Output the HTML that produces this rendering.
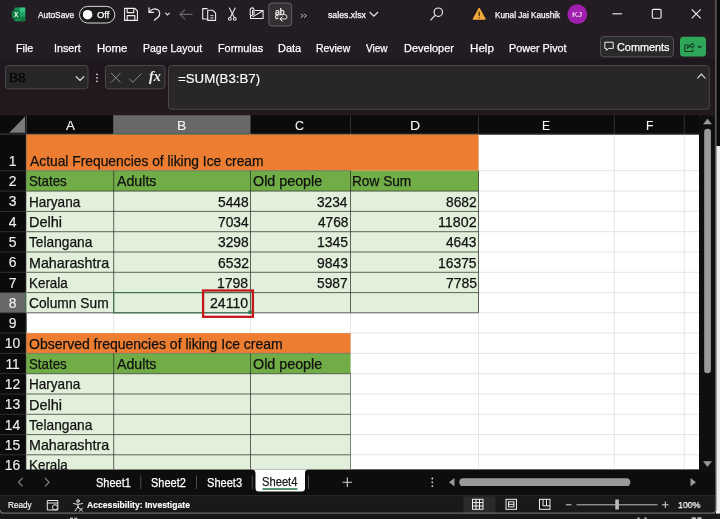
<!DOCTYPE html>
<html lang="en"><head><meta charset="utf-8"><title>sales.xlsx - Excel</title>
<style>
html,body{margin:0;padding:0;}
body{width:720px;height:519px;overflow:hidden;position:relative;background:#181818;font-family:"Liberation Sans",sans-serif;}
.r{position:absolute;box-sizing:border-box;}
.t{position:absolute;white-space:pre;transform-origin:0 50%;display:block;}
svg{position:absolute;left:0;top:0;overflow:visible;}
#labels,#sheet{will-change:transform;}
#sheet{position:absolute;left:0;top:0;width:699px;height:469.6px;overflow:hidden;}
.t{-webkit-text-stroke:0.25px currentColor;}
</style></head><body>
<svg aria-hidden="true" width="720" height="519" viewBox="0 0 720 519">
<rect x="716" y="0" width="4" height="146" fill="#0a0a0a"/>
<rect x="716" y="146" width="4" height="367.6" fill="#ececec"/>
<g fill="#bdbdbd"><rect x="70" y="517.6" width="3" height="1.4"/><rect x="74.300" y="517.6" width="3" height="1.4"/><rect x="637.5" y="517.3" width="2" height="1.7"/><rect x="644.5" y="517.3" width="2" height="1.7"/><rect x="691.500" y="517.3" width="4.500" height="1.7" rx="0.8"/><rect x="697.200" y="517.3" width="4.500" height="1.7" rx="0.8"/></g>
<path d="M0 0H715.6V509.70000000000005a3.5 3.5 0 0 1 -3.5 3.5H3.5a3.5 3.5 0 0 1 -3.5 -3.5Z" fill="#231c22"/>
<defs><linearGradient id="fz" x1="0" y1="0" x2="0" y2="1"><stop offset="0" stop-color="#1f171e"/><stop offset="1" stop-color="#221a1c"/></linearGradient></defs>
<rect x="0" y="59" width="715.6" height="56.5" fill="url(#fz)"/>
<g id="title-icons" transform="translate(0,-0.8)">
<g><rect x="14.4" y="8.4" width="10.8" height="13.6" rx="1.2" fill="#1a8f55"/><rect x="19.8" y="8.4" width="5.4" height="4.6" fill="#33c481"/><rect x="19.8" y="13" width="5.4" height="4.5" fill="#21a366"/><rect x="19.8" y="17.5" width="5.4" height="4.5" fill="#107c41"/><rect x="11.8" y="11.5" width="7.9" height="8.1" rx="0.9" fill="#0f7a40"/></g>
<rect x="79.5" y="7.2" width="35.3" height="16.6" rx="8.3" fill="#1b1a1b" stroke="#d8d8d8" stroke-width="1"/>
<circle cx="87.6" cy="15.5" r="4.8" fill="#ffffff"/>
<g fill="none" stroke="#f0f0f0" stroke-width="1.1" stroke-linejoin="round"><path d="M124.6 9.2h10.2l2.6 2.6v9.4h-12.8z"/><path d="M127.2 9.4v4h6.6v-4"/><path d="M127.2 21v-4.6h7.6v4.6"/></g>
<g fill="none" stroke="#f0f0f0" stroke-width="1.2" stroke-linecap="round" stroke-linejoin="round"><path d="M149 8.6v4.6h4.6"/><path d="M149.4 13c1.4-2.6 5-4.4 8-2.6 3 1.800 3 5.400 0.600 7.600l-3.600 3"/></g>
<path d="M165.3 13.6l2.2 2.200 2.200-2.200" fill="none" stroke="#e0e0e0" stroke-width="1.1"/>
<g fill="none" stroke="#6a666a" stroke-width="1.1" stroke-linecap="round" stroke-linejoin="round"><path d="M180 15.2h12"/><path d="M184.6 10.800l-4.600 4.400 4.600 4.400"/></g>
<g fill="none" stroke="#f0f0f0" stroke-width="1.1" stroke-linejoin="round"><path d="M207.600 9.400h-4.900v10.400h4.900"/><path d="M207.700 11h4.900l3 3v7.200h-7.900z" fill="#231c22"/><path d="M210.300 16.400h3.200M210.300 18.700h3.200" stroke-width="0.9"/></g>
<g fill="none" stroke="#f0f0f0" stroke-width="1.050" stroke-linecap="round"><path d="M229.400 8.800l4.800 9.200"/><path d="M235.200 8.800l-4.800 9.200"/><circle cx="229.800" cy="19.600" r="1.400"/><circle cx="234.800" cy="19.600" r="1.400"/></g>
<g fill="none" stroke="#f0f0f0" stroke-width="1.050" stroke-linejoin="round" stroke-linecap="round"><path d="M255.400 11.400h7.700v7.800h-12.600v-2.200"/><path d="M253 17.400l9.600-5.600"/><path d="M252.600 11v4.200a1.200 1.200 0 0 1 -2.400 0v-4.600a1.900 1.900 0 0 1 3.800 0v4.800"/></g>
<rect x="268.800" y="3.800" width="22.800" height="23" rx="3.2" fill="#352f33" stroke="#6d676b" stroke-width="0.9"/>
<g fill="none" stroke="#f0f0f0" stroke-width="0.95" stroke-linecap="round" stroke-linejoin="round"><path d="M282.300 17.600l-2.400 2.200 2.400 2.200"/><path d="M280.200 19.800h4.600a2.200 2.200 0 0 0 0-4.400h-1"/></g>
<path d="M301 14.600l2 2-2 2M304.300 14.600l2 2-2 2" fill="none" stroke="#e8e8e8" stroke-width="0.9"/>
<path d="M369.600 12.800l4.200 4.200 4.200-4.200" fill="none" stroke="#f0f0f0" stroke-width="1.100"/>
<g fill="none" stroke="#f0f0f0" stroke-width="1.150" stroke-linecap="round"><circle cx="438.300" cy="13" r="4.200"/><path d="M435.200 16.200l-4.400 4.400"/></g>
<path d="M479.200 8.800l6.200 11.200h-12.400z" fill="#f2a93b" stroke="#f2a93b" stroke-width="1" stroke-linejoin="round"/>
<path d="M479.200 12.600v4.200M479.200 18v1" stroke="#3a2a10" stroke-width="1.200" fill="none"/>
<circle cx="577.300" cy="15" r="9.900" fill="#a01fae"/>
<path d="M612.500 14.600h9.500" stroke="#f0f0f0" stroke-width="1.100" fill="none"/>
<rect x="652.300" y="10.200" width="8.800" height="8.800" rx="1.200" fill="none" stroke="#f0f0f0" stroke-width="1.100"/>
<path d="M691.700 10.200l9 9M700.700 10.200l-9 9" stroke="#f0f0f0" stroke-width="1.100" fill="none"/>
</g>
<rect x="600.500" y="36.600" width="73" height="20.200" rx="3.500" fill="#2b2a2b" stroke="#5a585a" stroke-width="0.900"/>
<path d="M604.800 42.200h8.400v6.200h-4.600l-2.200 2v-2h-1.600z" fill="none" stroke="#f0f0f0" stroke-width="1" stroke-linejoin="round"/>
<rect x="680" y="36.700" width="26" height="19.800" rx="3.500" fill="#2fa75b"/>
<g fill="none" stroke="#10301c" stroke-width="1" stroke-linejoin="round"><path d="M688.500 45h-3.700v6.500h8.200v-2"/><path d="M687 48.500c0.500-2.500 2.500-3.800 5-3.800v-1.700l2.800 2.600-2.800 2.600v-1.700c-2 0-3.500 0.500-5 2z"/></g>
<path d="M697.800 45.800l1.900 1.900 1.900-1.900" fill="none" stroke="#10301c" stroke-width="1.100"/>
<rect x="5.500" y="65.500" width="82.500" height="23.300" rx="3" fill="#292628" stroke="#504c50" stroke-width="0.900"/>
<path d="M75.800 76.300l4.200 4.200 4.200-4.200" fill="none" stroke="#e8e8e8" stroke-width="1.200"/>
<g fill="#d8d8d8"><circle cx="97" cy="74.300" r="0.900"/><circle cx="97" cy="77.800" r="0.900"/><circle cx="97" cy="81.300" r="0.900"/></g>
<rect x="105.500" y="65.500" width="59.500" height="23.300" rx="3" fill="#292628" stroke="#504c50" stroke-width="0.900"/>
<path d="M111 73l9.500 9.500M120.500 73l-9.500 9.500" stroke="#8a888a" stroke-width="1" fill="none"/>
<path d="M129 78.500l3.800 3.800 8.700-8.700" stroke="#8a888a" stroke-width="1" fill="none"/>
<rect x="168.500" y="65.500" width="540.800" height="43.700" rx="3" fill="#292628" stroke="#504c50" stroke-width="0.900"/>
<path d="M697.300 78.500l4.100-4.400 4.100 4.400" fill="none" stroke="#e8e8e8" stroke-width="1.100"/>
<rect x="0" y="115.2" width="699" height="354.40000000000003" fill="#0b0b0b"/>
<path d="M699 469.6V119.2a4 4 0 0 1 4 -4H710.6a4 4 0 0 1 4 4V469.6Z" fill="#0f0f0f"/>
<rect x="26.4" y="134.6" width="672.6" height="335.0" fill="#ffffff"/>
<rect x="113.2" y="115.2" width="137.3" height="19.39999999999999" fill="#686868"/>
<rect x="0" y="292.6" width="26.4" height="20.19999999999999" fill="#686868"/>
<path d="M0 170.7H26.4 M0 191.1H26.4 M0 211.4H26.4 M0 231.7H26.4 M0 252.0H26.4 M0 272.3H26.4 M0 292.6H26.4 M0 312.8H26.4 M0 333.1H26.4 M0 353.4H26.4 M0 373.7H26.4 M0 394.0H26.4 M0 414.3H26.4 M0 434.6H26.4 M0 454.8H26.4" stroke="#3a3a3a" stroke-width="0.8" fill="none"/>
<path d="M25 116.600V132.700H9.300z" fill="#7a7a7a"/>
<path d="M0 134.1H699M26.2 115.2V469.6" stroke="#4a4a4a" stroke-width="0.9" fill="none"/>
<path d="M250.5 115.2V134.6" stroke="#3a3a3a" stroke-width="0.800"/>
<path d="M350.5 115.2V134.6" stroke="#3a3a3a" stroke-width="0.800"/>
<path d="M478.5 115.2V134.6" stroke="#3a3a3a" stroke-width="0.800"/>
<path d="M614.3 115.2V134.6" stroke="#3a3a3a" stroke-width="0.800"/>
<path d="M684.3 115.2V134.6" stroke="#3a3a3a" stroke-width="0.800"/>
<path d="M26.4 115.2V134.6" stroke="#3a3a3a" stroke-width="0.800"/>
<path d="M113.2 134.1H250.5M25.799999999999997 292.6V312.8" stroke="#3f7552" stroke-width="1.3" fill="none"/>
<path d="M26.4 170.7H699 M26.4 191.1H699 M26.4 211.4H699 M26.4 231.7H699 M26.4 252.0H699 M26.4 272.3H699 M26.4 292.6H699 M26.4 312.8H699 M26.4 333.1H699 M26.4 353.4H699 M26.4 373.7H699 M26.4 394.0H699 M26.4 414.3H699 M26.4 434.6H699 M26.4 454.8H699 M113.7 134.6V469.6 M250.5 134.6V469.6 M350.5 134.6V469.6 M478.5 134.6V469.6 M614.3 134.6V469.6 M684.3 134.6V469.6" stroke="#e2e2e2" stroke-width="0.900" fill="none"/>
<rect x="26.4" y="134.6" width="452.1" height="36.099999999999994" fill="#ed7d31"/>
<rect x="26.4" y="170.7" width="452.1" height="20.400000000000006" fill="#70ad47"/>
<rect x="26.4" y="191.1" width="452.1" height="121.70000000000002" fill="#e2efda"/>
<rect x="26.4" y="333.1" width="324.1" height="20.299999999999955" fill="#ed7d31"/>
<rect x="26.4" y="353.4" width="324.1" height="20.30000000000001" fill="#70ad47"/>
<rect x="26.4" y="373.7" width="324.1" height="95.90000000000003" fill="#e2efda"/>
<path d="M26.4 170.7H350.5 M26.4 353.4H350.5 M350.5 373.7V469.6" stroke="#6f7a66" stroke-width="0.9" fill="none"/>
<path d="M26.4 191.1H478.5 M26.4 211.4H478.5 M26.4 231.7H478.5 M26.4 252.0H478.5 M26.4 272.3H478.5 M26.4 292.6H478.5 M26.4 312.8H478.5 M113.7 170.7V312.8 M250.5 170.7V312.8 M350.5 170.7V312.8 M478.5 170.7V312.8 M26.4 373.7H350.5 M26.4 394.0H350.5 M26.4 414.3H350.5 M26.4 434.6H350.5 M26.4 454.8H350.5 M113.7 353.4V469.6 M250.5 353.4V469.6" stroke="#30352e" stroke-width="0.75" fill="none"/>
<rect x="113.7" y="292.6" width="136.8" height="20.19999999999999" fill="none" stroke="#3d7353" stroke-width="1.1"/>
<rect x="248.300" y="310.600" width="3.400" height="3.400" fill="#2f7d52"/>
<rect x="203.100" y="290.500" width="49.800" height="26.300" fill="none" stroke="#c5161d" stroke-width="2.300"/>
<path d="M703.6 124l3.900-5 3.900 5z" fill="#9a9a9a" stroke="#9a9a9a" stroke-width="0.6" stroke-linejoin="round"/>
<rect x="704.2" y="128.700" width="6.700" height="244.500" rx="3.300" fill="#9a9a9a"/>
<path d="M703.6 461.600l3.900 5 3.900-5z" fill="#9a9a9a" stroke="#9a9a9a" stroke-width="0.6" stroke-linejoin="round"/>
<rect x="0" y="469.6" width="715.6" height="26.0" fill="#0d0d0d"/>
<path d="M22.500 478l-4 4.200 4 4.200" fill="none" stroke="#8a8a8a" stroke-width="1.100"/>
<path d="M45 478l4 4.200-4 4.200" fill="none" stroke="#8a8a8a" stroke-width="1.100"/>
<path d="M140.800 475.500v13.500M196.500 475.500v13.500M252.300 475.500v13.500M308.500 475.500v13.500" stroke="#555" stroke-width="0.900"/>
<path d="M252.500 469.600h55.500c-2.500 0.500-3 2-3 4v14.500a3.500 3.500 0 0 1 -3.500 3.500h-42.500a3.500 3.500 0 0 1 -3.500-3.500v-14.500c0-2-0.500-3.500-3-4z" fill="#ffffff"/>
<path d="M262.500 489h35" stroke="#1e7145" stroke-width="1.600"/>
<path d="M342.500 482.300h9.500M347.300 477.500v9.500" stroke="#d0d0d0" stroke-width="1.100"/>
<g fill="#e0e0e0"><circle cx="432.300" cy="478.500" r="0.900"/><circle cx="432.300" cy="482.300" r="0.900"/><circle cx="432.300" cy="486.100" r="0.900"/></g>
<path d="M454.500 478l-5.500 4.300 5.500 4.300z" fill="#9a9a9a"/>
<rect x="459.300" y="478.300" width="171" height="7.800" rx="3.900" fill="#9a9a9a"/>
<path d="M690.500 478l5.500 4.300-5.500 4.300z" fill="#9a9a9a"/>
<path d="M0 495.600H715.6V509.70000000000005a3.5 3.5 0 0 1 -3.5 3.5H3.5a3.5 3.5 0 0 1 -3.5 -3.5Z" fill="#191919"/>
<path d="M0 495.600H715.6" stroke="#2e2e2e" stroke-width="0.800"/>
<g fill="none" stroke="#e8e8e8" stroke-width="1"><path d="M47.300 500.500h10.500v9.500h-10.500z"/><path d="M47.300 503h10.500"/><circle cx="55" cy="507.300" r="2.600" fill="#161616"/></g>
<g fill="none" stroke="#e8e8e8" stroke-width="1" stroke-linecap="round"><circle cx="78" cy="501" r="1.300"/><path d="M73.500 503.500c3 1 6 1 9 0M78 504.300v2.500M78 506.800l-3 4.200M78 506.800l1.500 2"/><path d="M79.500 508l3 3M82.500 508l-3 3"/></g>
<rect x="463.300" y="496.300" width="32.200" height="16.700" fill="#2a2a2a"/>
<g fill="none" stroke="#f0f0f0" stroke-width="1"><rect x="472.500" y="499.300" width="10.500" height="10"/><path d="M476 499.300v10M479.500 499.300v10M472.500 502.600h10.500M472.500 506h10.500"/></g>
<g fill="none" stroke="#f0f0f0" stroke-width="1"><rect x="506" y="499.300" width="10.500" height="10"/><rect x="508.500" y="501.800" width="5.500" height="5"/><path d="M508.500 504.300h5.500"/></g>
<g fill="none" stroke="#f0f0f0" stroke-width="1"><rect x="539.500" y="499.300" width="10.500" height="10"/><path d="M543 499.300v6.500h7M546.500 499.300v6.500"/></g>
<path d="M566 504.800h5.500" stroke="#d8d8d8" stroke-width="1"/>
<path d="M576.500 504.800h81" stroke="#bdbdbd" stroke-width="1"/>
<rect x="615.300" y="499.500" width="3.600" height="10" fill="#bdbdbd"/>
<path d="M662 504.800h6.500M665.300 501.500v6.500" stroke="#d8d8d8" stroke-width="1"/>
<path d="M715.9 0V509.70000000000005a3.5 3.5 0 0 1 -3.5 3.5H3.5a3.5 3.5 0 0 1 -3.5 -3.5" fill="none" stroke="#6a6a6a" stroke-width="1.3"/>
</svg>
<div id="labels">
<span class="t" style="left:13.70px;top:10.40px;font-size:6.6px;line-height:9px;color:#ffffff;transform:scaleX(0.9922);font-weight:700;-webkit-text-stroke-width:0px;">X</span>
<span class="t" style="left:38.00px;top:8.90px;font-size:9.2px;line-height:12px;color:#ffffff;transform:scaleX(0.9058);">AutoSave</span>
<span class="t" style="left:96.76px;top:9.00px;font-size:9.2px;line-height:12px;color:#ffffff;transform:scaleX(1.0255);">Off</span>
<span class="t" style="left:275.03px;top:6.60px;font-size:8.2px;line-height:11px;color:#ffffff;transform:scaleX(1.0548);">ab</span>
<span class="t" style="left:274.98px;top:12.30px;font-size:7.5px;line-height:10px;color:#ffffff;transform:scaleX(0.9416);">c</span>
<span class="t" style="left:327.56px;top:9.20px;font-size:9.2px;line-height:12px;color:#ffffff;transform:scaleX(0.9513);">sales.xlsx</span>
<span class="t" style="left:494.66px;top:9.20px;font-size:9.2px;line-height:12px;color:#ffffff;transform:scaleX(0.8917);">Kunal Jai Kaushik</span>
<span class="t" style="left:572.11px;top:10.30px;font-size:7.6px;line-height:10px;color:#ffffff;transform:scaleX(1.1538);-webkit-text-stroke-width:0px;">KJ</span>
<span class="t" style="left:15.86px;top:40.80px;font-size:11.1px;line-height:14px;color:#ffffff;transform:scaleX(0.9717);">File</span>
<span class="t" style="left:54.16px;top:40.80px;font-size:11.1px;line-height:14px;color:#ffffff;transform:scaleX(0.9654);">Insert</span>
<span class="t" style="left:97.41px;top:40.80px;font-size:11.1px;line-height:14px;color:#ffffff;transform:scaleX(1.0250);">Home</span>
<span class="t" style="left:143.18px;top:40.80px;font-size:11.1px;line-height:14px;color:#ffffff;transform:scaleX(0.9479);">Page Layout</span>
<span class="t" style="left:218.45px;top:40.80px;font-size:11.1px;line-height:14px;color:#ffffff;transform:scaleX(0.9768);">Formulas</span>
<span class="t" style="left:278.15px;top:40.80px;font-size:11.1px;line-height:14px;color:#ffffff;transform:scaleX(0.9846);">Data</span>
<span class="t" style="left:315.69px;top:40.80px;font-size:11.1px;line-height:14px;color:#ffffff;transform:scaleX(0.9393);">Review</span>
<span class="t" style="left:366.30px;top:40.80px;font-size:11.1px;line-height:14px;color:#ffffff;transform:scaleX(0.9044);">View</span>
<span class="t" style="left:404.14px;top:40.80px;font-size:11.1px;line-height:14px;color:#ffffff;transform:scaleX(0.9864);">Developer</span>
<span class="t" style="left:469.59px;top:40.80px;font-size:11.1px;line-height:14px;color:#ffffff;transform:scaleX(1.0459);">Help</span>
<span class="t" style="left:508.66px;top:40.80px;font-size:11.1px;line-height:14px;color:#ffffff;transform:scaleX(0.9727);">Power Pivot</span>
<span class="t" style="left:616.79px;top:40.00px;font-size:11.3px;line-height:15px;color:#ffffff;transform:scaleX(0.9619);">Comments</span>
<span class="t" style="left:8.63px;top:69.40px;font-size:12.8px;line-height:17px;color:#050505;transform:scaleX(1.0681);">B8</span>
<span class="t" style="left:149.20px;top:68.20px;font-size:14px;line-height:18px;color:#f0f0f0;transform:scaleX(1.0137);font-weight:700;font-style:italic;font-family:'Liberation Serif',serif;-webkit-text-stroke-width:0px;">fx</span>
<span class="t" style="left:178.08px;top:69.80px;font-size:13.4px;line-height:17px;color:#ffffff;transform:scaleX(0.9901);-webkit-text-stroke-width:0.15px;">=SUM(B3:B7)</span>
<span class="t" style="left:96.16px;top:475.00px;font-size:12px;line-height:16px;color:#ffffff;transform:scaleX(0.9147);">Sheet1</span>
<span class="t" style="left:151.16px;top:475.00px;font-size:12px;line-height:16px;color:#ffffff;transform:scaleX(0.9147);">Sheet2</span>
<span class="t" style="left:206.65px;top:475.00px;font-size:12px;line-height:16px;color:#ffffff;transform:scaleX(0.9227);">Sheet3</span>
<span class="t" style="left:262.15px;top:473.50px;font-size:12px;line-height:16px;color:#1a1a1a;transform:scaleX(0.9315);">Sheet4</span>
<span class="t" style="left:8.06px;top:499.10px;font-size:9.2px;line-height:12px;color:#ffffff;transform:scaleX(0.8928);-webkit-text-stroke-width:0.15px;">Ready</span>
<span class="t" style="left:87.17px;top:498.70px;font-size:9.6px;line-height:12px;color:#ffffff;transform:scaleX(0.8983);font-weight:700;-webkit-text-stroke-width:0.15px;">Accessibility: Investigate</span>
<span class="t" style="left:678.45px;top:498.30px;font-size:9.7px;line-height:13px;color:#ffffff;transform:scaleX(0.8991);">100%</span>
</div>
<div id="sheet" class="clip">
<span class="t" style="left:65.50px;top:116.70px;font-size:13.7px;line-height:18px;color:#f4f4f4;transform:scaleX(0.9778);-webkit-text-stroke-width:0.1px;">A</span>
<span class="t" style="left:177.11px;top:116.70px;font-size:13.7px;line-height:18px;color:#f4f4f4;transform:scaleX(1.0144);-webkit-text-stroke-width:0.1px;">B</span>
<span class="t" style="left:295.41px;top:116.70px;font-size:13.7px;line-height:18px;color:#f4f4f4;transform:scaleX(0.9115);-webkit-text-stroke-width:0.1px;">C</span>
<span class="t" style="left:409.60px;top:116.70px;font-size:13.7px;line-height:18px;color:#f4f4f4;transform:scaleX(1.0301);-webkit-text-stroke-width:0.1px;">D</span>
<span class="t" style="left:542.46px;top:116.70px;font-size:13.7px;line-height:18px;color:#f4f4f4;transform:scaleX(0.8809);-webkit-text-stroke-width:0.1px;">E</span>
<span class="t" style="left:645.76px;top:116.70px;font-size:13.7px;line-height:18px;color:#f4f4f4;transform:scaleX(0.8759);-webkit-text-stroke-width:0.1px;">F</span>
<span class="t" style="left:8.73px;top:151.70px;font-size:13.9px;line-height:18px;color:#f0f0f0;transform:scaleX(1.0000);-webkit-text-stroke-width:0.12px;">1</span>
<span class="t" style="left:8.73px;top:172.10px;font-size:13.9px;line-height:18px;color:#f0f0f0;transform:scaleX(1.0000);-webkit-text-stroke-width:0.12px;">2</span>
<span class="t" style="left:8.73px;top:192.40px;font-size:13.9px;line-height:18px;color:#f0f0f0;transform:scaleX(1.0000);-webkit-text-stroke-width:0.12px;">3</span>
<span class="t" style="left:8.73px;top:212.70px;font-size:13.9px;line-height:18px;color:#f0f0f0;transform:scaleX(1.0000);-webkit-text-stroke-width:0.12px;">4</span>
<span class="t" style="left:8.73px;top:233.00px;font-size:13.9px;line-height:18px;color:#f0f0f0;transform:scaleX(1.0000);-webkit-text-stroke-width:0.12px;">5</span>
<span class="t" style="left:8.73px;top:253.30px;font-size:13.9px;line-height:18px;color:#f0f0f0;transform:scaleX(1.0000);-webkit-text-stroke-width:0.12px;">6</span>
<span class="t" style="left:8.73px;top:273.60px;font-size:13.9px;line-height:18px;color:#f0f0f0;transform:scaleX(1.0000);-webkit-text-stroke-width:0.12px;">7</span>
<span class="t" style="left:8.73px;top:293.80px;font-size:13.9px;line-height:18px;color:#f0f0f0;transform:scaleX(1.0000);-webkit-text-stroke-width:0.12px;">8</span>
<span class="t" style="left:8.73px;top:314.10px;font-size:13.9px;line-height:18px;color:#f0f0f0;transform:scaleX(1.0000);-webkit-text-stroke-width:0.12px;">9</span>
<span class="t" style="left:4.87px;top:334.40px;font-size:13.9px;line-height:18px;color:#f0f0f0;transform:scaleX(1.0000);-webkit-text-stroke-width:0.12px;">10</span>
<span class="t" style="left:5.39px;top:354.70px;font-size:13.9px;line-height:18px;color:#f0f0f0;transform:scaleX(1.0000);-webkit-text-stroke-width:0.12px;">11</span>
<span class="t" style="left:4.87px;top:375.00px;font-size:13.9px;line-height:18px;color:#f0f0f0;transform:scaleX(1.0000);-webkit-text-stroke-width:0.12px;">12</span>
<span class="t" style="left:4.87px;top:395.30px;font-size:13.9px;line-height:18px;color:#f0f0f0;transform:scaleX(1.0000);-webkit-text-stroke-width:0.12px;">13</span>
<span class="t" style="left:4.87px;top:415.60px;font-size:13.9px;line-height:18px;color:#f0f0f0;transform:scaleX(1.0000);-webkit-text-stroke-width:0.12px;">14</span>
<span class="t" style="left:4.87px;top:435.80px;font-size:13.9px;line-height:18px;color:#f0f0f0;transform:scaleX(1.0000);-webkit-text-stroke-width:0.12px;">15</span>
<span class="t" style="left:4.87px;top:456.00px;font-size:13.9px;line-height:18px;color:#f0f0f0;transform:scaleX(1.0000);-webkit-text-stroke-width:0.12px;">16</span>
<span class="t" style="left:29.50px;top:151.90px;font-size:13.9px;line-height:18px;color:#111111;transform:scaleX(0.9951);">Actual Frequencies of liking Ice cream</span>
<span class="t" style="left:28.88px;top:172.30px;font-size:13.9px;line-height:18px;color:#111111;transform:scaleX(0.9575);">States</span>
<span class="t" style="left:116.50px;top:172.30px;font-size:13.9px;line-height:18px;color:#111111;transform:scaleX(1.0210);">Adults</span>
<span class="t" style="left:252.83px;top:172.30px;font-size:13.9px;line-height:18px;color:#111111;transform:scaleX(1.0300);">Old people</span>
<span class="t" style="left:352.43px;top:172.30px;font-size:13.9px;line-height:18px;color:#111111;transform:scaleX(0.9839);">Row Sum</span>
<span class="t" style="left:28.64px;top:192.60px;font-size:13.9px;line-height:18px;color:#111111;transform:scaleX(0.9759);">Haryana</span>
<span class="t" style="left:28.57px;top:212.90px;font-size:13.9px;line-height:18px;color:#111111;transform:scaleX(1.0447);">Delhi</span>
<span class="t" style="left:29.09px;top:233.20px;font-size:13.9px;line-height:18px;color:#111111;transform:scaleX(0.9871);">Telangana</span>
<span class="t" style="left:28.58px;top:253.50px;font-size:13.9px;line-height:18px;color:#111111;transform:scaleX(1.0268);">Maharashtra</span>
<span class="t" style="left:28.65px;top:273.80px;font-size:13.9px;line-height:18px;color:#111111;transform:scaleX(0.9647);">Kerala</span>
<span class="t" style="left:28.85px;top:294.00px;font-size:13.9px;line-height:18px;color:#111111;transform:scaleX(0.9915);">Column Sum</span>
<span class="t" style="left:217.85px;top:192.60px;font-size:13.9px;line-height:18px;color:#111111;transform:scaleX(0.9932);">5448</span>
<span class="t" style="left:317.35px;top:192.60px;font-size:13.9px;line-height:18px;color:#111111;transform:scaleX(0.9860);">3234</span>
<span class="t" style="left:445.85px;top:192.60px;font-size:13.9px;line-height:18px;color:#111111;transform:scaleX(0.9932);">8682</span>
<span class="t" style="left:217.63px;top:212.90px;font-size:13.9px;line-height:18px;color:#111111;transform:scaleX(0.9932);">7034</span>
<span class="t" style="left:317.57px;top:212.90px;font-size:13.9px;line-height:18px;color:#111111;transform:scaleX(0.9860);">4768</span>
<span class="t" style="left:437.96px;top:212.90px;font-size:13.9px;line-height:18px;color:#111111;transform:scaleX(1.0266);">11802</span>
<span class="t" style="left:217.85px;top:233.20px;font-size:13.9px;line-height:18px;color:#111111;transform:scaleX(0.9932);">3298</span>
<span class="t" style="left:316.90px;top:233.20px;font-size:13.9px;line-height:18px;color:#111111;transform:scaleX(1.0078);">1345</span>
<span class="t" style="left:446.07px;top:233.20px;font-size:13.9px;line-height:18px;color:#111111;transform:scaleX(0.9860);">4643</span>
<span class="t" style="left:217.63px;top:253.50px;font-size:13.9px;line-height:18px;color:#111111;transform:scaleX(1.0004);">6532</span>
<span class="t" style="left:317.13px;top:253.50px;font-size:13.9px;line-height:18px;color:#111111;transform:scaleX(1.0004);">9843</span>
<span class="t" style="left:437.98px;top:253.50px;font-size:13.9px;line-height:18px;color:#111111;transform:scaleX(0.9981);">16375</span>
<span class="t" style="left:217.40px;top:273.80px;font-size:13.9px;line-height:18px;color:#111111;transform:scaleX(1.0078);">1798</span>
<span class="t" style="left:317.35px;top:273.80px;font-size:13.9px;line-height:18px;color:#111111;transform:scaleX(0.9932);">5987</span>
<span class="t" style="left:445.63px;top:273.80px;font-size:13.9px;line-height:18px;color:#111111;transform:scaleX(1.0004);">7785</span>
<span class="t" style="left:210.19px;top:294.00px;font-size:13.9px;line-height:18px;color:#111111;transform:scaleX(1.0144);">24110</span>
<span class="t" style="left:28.84px;top:334.60px;font-size:13.9px;line-height:18px;color:#111111;transform:scaleX(1.0080);">Observed frequencies of liking Ice cream</span>
<span class="t" style="left:28.88px;top:354.90px;font-size:13.9px;line-height:18px;color:#111111;transform:scaleX(0.9575);">States</span>
<span class="t" style="left:116.50px;top:354.90px;font-size:13.9px;line-height:18px;color:#111111;transform:scaleX(1.0210);">Adults</span>
<span class="t" style="left:252.83px;top:354.90px;font-size:13.9px;line-height:18px;color:#111111;transform:scaleX(1.0300);">Old people</span>
<span class="t" style="left:28.64px;top:375.20px;font-size:13.9px;line-height:18px;color:#111111;transform:scaleX(0.9759);">Haryana</span>
<span class="t" style="left:28.57px;top:395.50px;font-size:13.9px;line-height:18px;color:#111111;transform:scaleX(1.0447);">Delhi</span>
<span class="t" style="left:29.09px;top:415.80px;font-size:13.9px;line-height:18px;color:#111111;transform:scaleX(0.9871);">Telangana</span>
<span class="t" style="left:28.58px;top:436.00px;font-size:13.9px;line-height:18px;color:#111111;transform:scaleX(1.0268);">Maharashtra</span>
<span class="t" style="left:28.65px;top:456.20px;font-size:13.9px;line-height:18px;color:#111111;transform:scaleX(0.9647);">Kerala</span>
</div>
</body></html>
